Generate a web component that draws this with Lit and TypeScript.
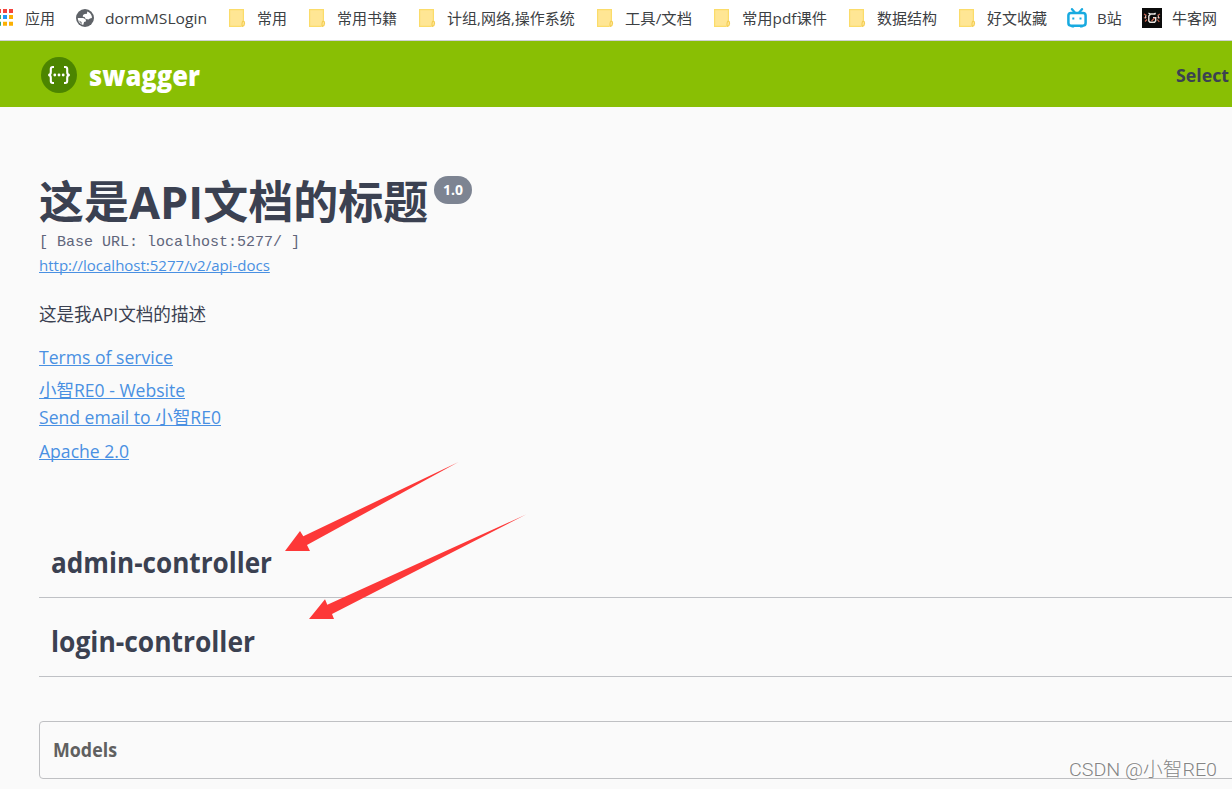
import { LitElement, html, css, svg } from "lit";
import { customElement, property } from "lit/decorators.js";

/** One line of text set to an exact advance width. */
@customElement("fit-text")
class FitText extends LitElement {
  @property({ type: Number }) width = 0;
  @property() text = "";

  static styles = css`
    :host { display: block; flex: none; white-space: pre; text-decoration: inherit; }
    .line { display: inline-block; transform-origin: 0 50%; text-decoration: inherit; }
  `;

  firstUpdated() {
    const line = this.renderRoot.querySelector(".line") as HTMLElement;
    const natural = line.getBoundingClientRect().width;
    this.style.width = `${this.width}px`;
    if (natural > 0 && Math.abs(natural - this.width) > 0.4) {
      line.style.transform = `scaleX(${this.width / natural})`;
    }
  }

  render() {
    return html`<span class="line">${this.text}</span>`;
  }
}

const folder = svg`
  <path d="M2.600 1.600h13.800v12l-1 4.800H2.600z" fill="#ffe694"/>
  <path d="M16.400 12.500V1.600H2.600v16.800h12" fill="none" stroke="#fbdc6a" stroke-width="1.200"/>
  <path d="M16.300 12.800c1 .6 1.300 1.300 1.300 2.500 0 1.500-.7 2.600-2.200 3.100-.8-1-.6-4.500.9-5.600z" fill="#ffe694" stroke="#f5cf55" stroke-width="1.100"/>`;

const icons: Record<string, unknown> = {
  apps: svg`
    <path d="M2 1h4v4H2zM8 1h4v4H8zM14 1h4v4h-4z" fill="#f4433c"/>
    <path d="M2 7h4v4H2zM2 13.800h4v4H2z" fill="#34a870"/>
    <path d="M8 7h4v4H8z" fill="#2196f3"/>
    <path d="M14 7h4v4h-4zM8 13.800h4v4H8zM14 13.800h4v4h-4z" fill="#fbb003"/>`,
  globe: svg`
    <circle cx="10" cy="10" r="9" fill="#5f6368"/>
    <path d="M12.200 3.500c2.300.7 4 2.500 4.600 4.800l.1 1.700-2 .4-1.400 1.100-2.800-.5-1.100-1.900-1.800-.3.200-1.900 1.700-.9 2.300-.3z" fill="#fff"/>
    <path d="M2.800 10h5.400l2.300 1.300.6 1.900-2 .8-.9 2.900c-3.200-.8-5.400-3.600-5.400-6.900z" fill="#fff"/>
    <path d="M3 11.800c1.200 1.400 2.700 1.700 3.500 2.200l.3 2.200z" fill="#5f6368"/>`,
  folder,
  bili: svg`
    <path d="M5 1.200l2.800 3.200M15 1.200l-2.800 3.200" stroke="#18aae0" stroke-width="2.300" stroke-linecap="round"/>
    <rect x="1.400" y="4.900" width="17.200" height="12.800" rx="2.600" fill="#fff" stroke="#18aae0" stroke-width="2.500"/>
    <path d="M4.500 18.600h2.600M13 18.600h2.600" stroke="#18aae0" stroke-width="1.600"/>
    <path d="M6.300 9.500v2M13.500 9.500v2" stroke="#18aae0" stroke-width="2"/>`,
  nowcoder: svg`
    <path d="M0 0h20v20H0z" fill="#0b0b0b"/>
    <path d="M13.500 6H8.600L6.800 8v5l1.200 1.200h4.500l1.200-1.500V9.800H11" fill="none" stroke="#e9e4df" stroke-width="1.400"/>
    <path d="M6.500 5l1.500 1M13.500 4.800l-1 1.200" stroke="#fff" stroke-width="1.100"/>
    <path d="M2 6l2.500 1.500M2 10l2.500-1M3 13.500l2-2M18 6l-2.500 1.500M18 10l-2.500-1M17.300 14l-2-2.500M9.500 13l3-3" stroke="#cf6650" stroke-width="1.200"/>
    <path d="M3.600 7.500v3M16.400 7.500v3" stroke="#e9e4df" stroke-width=".9"/>`,
};

const bookmarks: [string, string, number][] = [
  ["apps", "应用", 30],
  ["globe", "dormMSLogin", 102],
  ["folder", "常用", 30],
  ["folder", "常用书籍", 60],
  ["folder", "计组,网络,操作系统", 128],
  ["folder", "工具/文档", 67],
  ["folder", "常用pdf课件", 85],
  ["folder", "数据结构", 60],
  ["folder", "好文收藏", 60],
  ["bili", "B站", 25],
  ["nowcoder", "牛客网", 45],
];

const controllers: [string, number][] = [
  ["admin-controller", 221],
  ["login-controller", 204],
];

@customElement("app-root")
class AppRoot extends LitElement {
  static styles = css`
    :host {
      display: block;
      position: relative;
      width: 1232px;
      height: 789px;
      overflow: hidden;
      background: #fafafa;
      color: #3b4151;
      font-family: "Open Sans", "Noto Sans CJK SC", sans-serif;
    }
    * { box-sizing: border-box; }
    svg { display: block; flex: none; }
    .bookmarks {
      display: flex;
      gap: 20px;
      height: 41px;
      background: #fff;
      border-bottom: 1px solid #cfd1d4;
      font-size: 15px;
      line-height: 20px;
      color: #3c4043;
    }
    .bookmark { display: flex; gap: 10px; padding-top: 8px; }
    .bookmark:first-child { margin-left: -5px; }
    .topbar {
      display: flex;
      justify-content: space-between;
      height: 66px;
      padding: 16px 3px 0 41px;
      background: #89bf04;
    }
    .brand { display: flex; gap: 12px; }
    .wordmark { font-size: 28px; line-height: 36px; font-weight: 800; color: #fff; }
    .select { font-size: 18.500px; line-height: 36px; font-weight: 700; }
    .info { padding: 69px 0 0 39px; }
    .heading { display: flex; gap: 6px; height: 57px; }
    .title { font-size: 45px; line-height: 52px; font-weight: 700; }
    .version {
      width: 38px;
      height: 28px;
      padding-left: 9px;
      border-radius: 14px;
      background: #7d8492;
      color: #fff;
      font-size: 14px;
      line-height: 27px;
      font-weight: 700;
    }
    .base { font: 15px/20px "Liberation Mono", monospace; color: #60657a; }
    a {
      display: block;
      width: max-content;
      color: #4990e2;
      text-decoration: underline 1px;
      text-underline-offset: 0.500px;
      text-decoration-skip-ink: none;
    }
    .docs { margin-top: 2px; font-size: 15px; line-height: 20px; }
    .text { font-size: 18px; line-height: 27px; }
    .description { margin-top: 26px; }
    .terms { margin-top: 16px; }
    .website { margin-top: 6px; }
    .license { margin-top: 7px; }
    .sections { padding: 54px 0 0 39px; }
    .section {
      height: 79px;
      padding: 24px 0 0 12px;
      border-bottom: 1px solid #bfc1c5;
      font-size: 28px;
      line-height: 38px;
      font-weight: 700;
    }
    .models {
      height: 58px;
      margin: 44px -10px 0 39px;
      padding: 14px 0 0 13px;
      border: 1px solid #bfc0c3;
      border-radius: 4px;
      font-size: 19px;
      line-height: 28px;
      font-weight: 700;
      color: #606060;
    }
    .arrows { position: absolute; left: 0; top: 0; pointer-events: none; }
    .watermark {
      position: absolute;
      left: 1069px;
      top: 757px;
      font: 300 19px/26px Roboto, "Noto Sans CJK SC", sans-serif;
      color: #858585;
      text-shadow: -1px -1px 0 #fff;
    }
  `;

  render() {
    return html`
      <nav class="bookmarks">
        ${bookmarks.map(
          ([icon, label, width]) => html`
            <div class="bookmark">
              <svg width="20" height="20" viewBox="0 0 20 20">${icons[icon]}</svg>
              <fit-text .width=${width} .text=${label}></fit-text>
            </div>`
        )}
      </nav>
      <header class="topbar">
        <div class="brand">
          <svg width="36" height="36" viewBox="0 0 36 36">
            <circle cx="18" cy="18" r="18" fill="#4c8500"/>
            <g fill="none" stroke="#fff" stroke-width="2.100">
              <path d="M13 10h-1.200q-2 0-2 2v3.300q0 2.700-2.600 2.700 2.600 0 2.600 2.700V24q0 2 2 2H13"/>
              <path d="M23 10h1.200q2 0 2 2v3.300q0 2.700 2.600 2.700-2.600 0-2.600 2.700V24q0 2-2 2H23"/>
            </g>
            <g fill="#fff"><circle cx="13.800" cy="18" r="1.400"/><circle cx="18" cy="18" r="1.400"/><circle cx="22.200" cy="18" r="1.400"/></g>
          </svg>
          <fit-text class="wordmark" .width=${111} .text=${"swagger"}></fit-text>
        </div>
        <fit-text class="select" .width=${53} .text=${"Select"}></fit-text>
      </header>
      <section class="info">
        <div class="heading">
          <fit-text class="title" .width=${389} .text=${"这是API文档的标题"}></fit-text>
          <div class="version"><fit-text .width=${20} .text=${"1.0"}></fit-text></div>
        </div>
        <fit-text class="base" .width=${261} .text=${"[ Base URL: localhost:5277/ ]"}></fit-text>
        <a class="docs"><fit-text .width=${231} .text=${"http://localhost:5277/v2/api-docs"}></fit-text></a>
        <fit-text class="text description" .width=${167} .text=${"这是我API文档的描述"}></fit-text>
        <a class="text terms"><fit-text .width=${134} .text=${"Terms of service"}></fit-text></a>
        <a class="text website"><fit-text .width=${146} .text=${"小智RE0 - Website"}></fit-text></a>
        <a class="text"><fit-text .width=${182} .text=${"Send email to 小智RE0"}></fit-text></a>
        <a class="text license"><fit-text .width=${90} .text=${"Apache 2.0"}></fit-text></a>
      </section>
      <section class="sections">
        ${controllers.map(
          ([name, width]) => html`
            <div class="section"><fit-text .width=${width} .text=${name}></fit-text></div>`
        )}
      </section>
      <section class="models"><fit-text .width=${64} .text=${"Models"}></fit-text></section>
      <svg class="arrows" width="1232" height="789" viewBox="0 0 1232 789" fill="#fd3838">
        <path d="M285 551L300 531L303.300 536.300L458.500 462L307 545L310 551Z"/>
        <path d="M309 619L325 599.300L327.300 604.800L526 514.500L332 614L334 619Z"/>
      </svg>
      <fit-text class="watermark" .width=${148} .text=${"CSDN @小智RE0"}></fit-text>
    `;
  }
}
